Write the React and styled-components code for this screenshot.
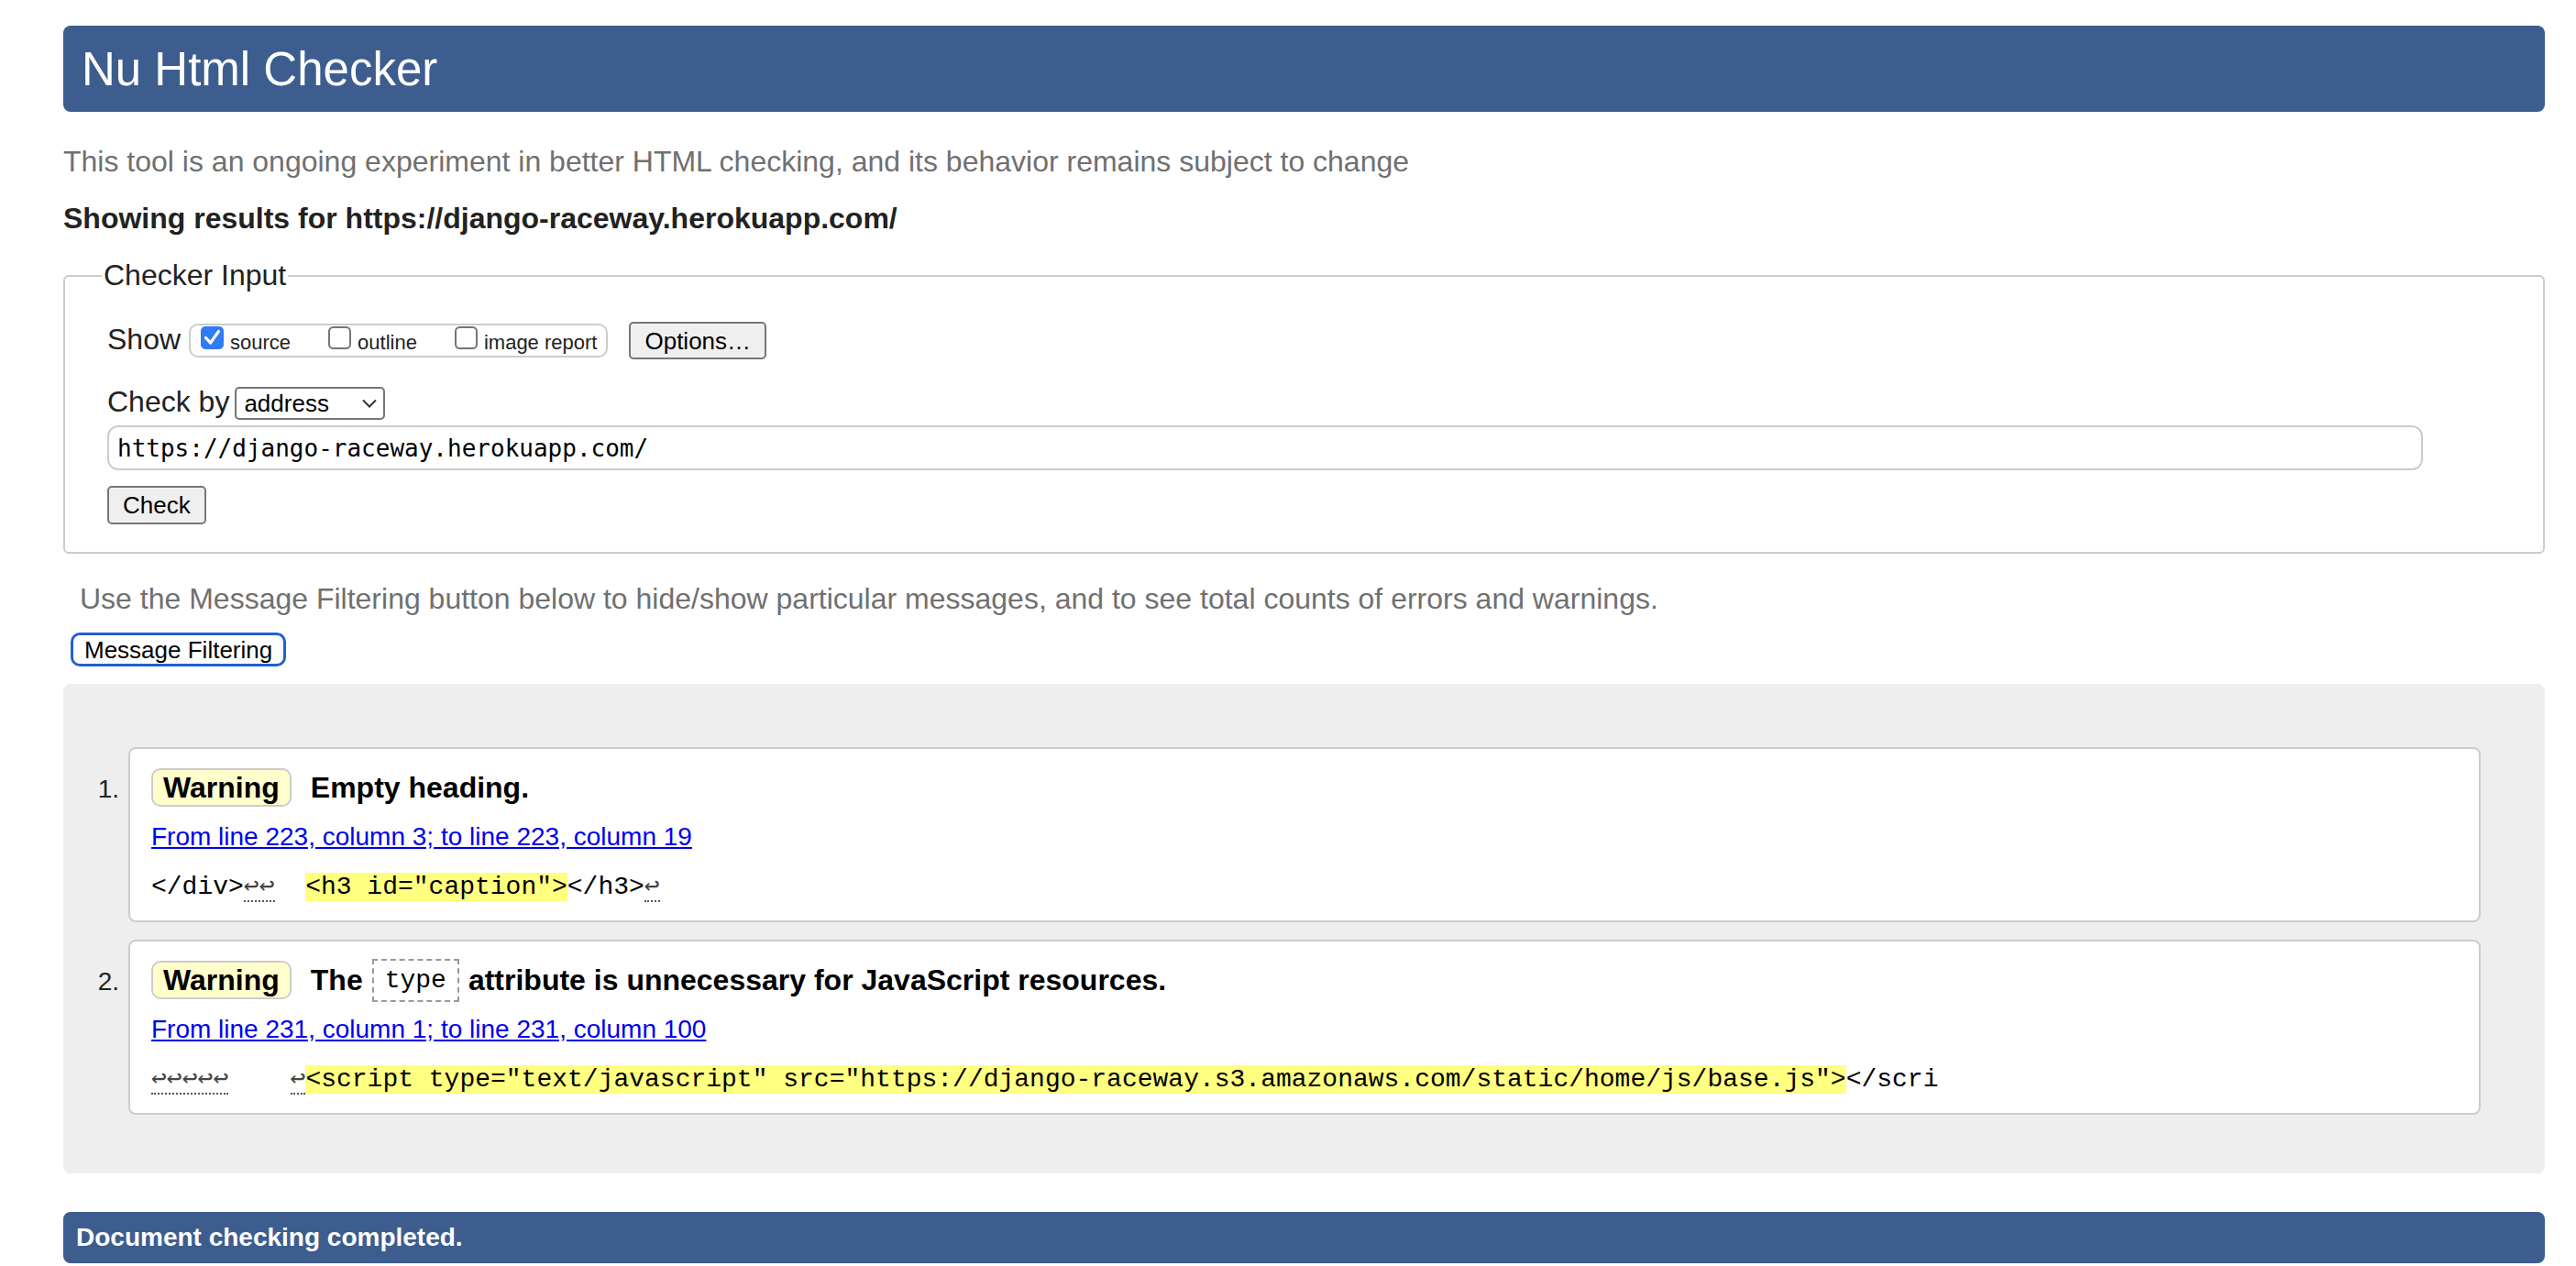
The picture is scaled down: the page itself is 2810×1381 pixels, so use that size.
import React from "react"
import styled, { createGlobalStyle } from "styled-components"

const GlobalStyle = createGlobalStyle`
  html, body {
    margin: 0;
    padding: 0;
    background: #fff;
  }
  body {
    font-family: "Liberation Sans", Arial, sans-serif;
    color: #222;
  }
`

const Page = styled.div`
  padding: 28px 34px 4px 69px;
`

const Title = styled.h1`
  margin: 0;
  height: 94px;
  display: flex;
  align-items: center;
  padding-left: 20px;
  background: #3d5d8f;
  color: #fff;
  font-size: 51px;
  font-weight: normal;
  line-height: 57px;
  border-radius: 8px;
`

const Para = styled.p`
  margin: ${(p) => p.$mt}px 0 0 ${(p) => p.$ml || 0}px;
  font-size: 32px;
  line-height: 37px;
  color: ${(p) => (p.$muted ? "#707070" : "#222")};
  font-weight: ${(p) => (p.$bold ? "bold" : "normal")};
`

const InputFieldset = styled.fieldset`
  margin: 25px 0 0;
  min-width: 0;
  border: 2px solid #ccc;
  border-radius: 6px;
  padding: 32px 131px 30px 46px;
`

const Legend = styled.legend`
  margin-left: -6px;
  padding: 0 2px;
  font-size: 32px;
  line-height: 37px;
  color: #222;
`

const FormRow = styled.div`
  display: flex;
  align-items: baseline;
  margin-top: ${(p) => p.$mt || 0}px;
`

const RowLabel = styled.span`
  font-size: 32px;
  line-height: 37px;
  color: #222;
  margin-right: ${(p) => p.$gap}px;
`

const OptionGroup = styled.span`
  display: inline-flex;
  align-items: center;
  box-sizing: border-box;
  height: 37px;
  border: 2px solid #ccc;
  border-radius: 10px;
  padding: 0 10px 0 11px;
  margin-right: 23px;
`

const CheckItem = styled.label`
  display: inline-flex;
  align-items: baseline;
  margin-right: ${(p) => (p.$last ? 0 : 41)}px;
  font-size: 22px;
  line-height: 26px;
  color: #222;
`

const BoxIcon = styled.svg`
  flex-shrink: 0;
  margin-right: 7px;
`

const Button = styled.button`
  box-sizing: border-box;
  height: ${(p) => p.$h}px;
  padding: 0 15px;
  background: #efefef;
  border: 2px solid #767676;
  border-radius: 5px;
  color: #000;
  font-family: "Liberation Sans", Arial, sans-serif;
  font-size: 26px;
  line-height: 32px;
`

const SelectBox = styled.span`
  display: inline-flex;
  align-items: center;
  justify-content: space-between;
  box-sizing: border-box;
  width: 164px;
  height: 36px;
  padding: 0 7px 0 8px;
  border: 2px solid #767676;
  border-radius: 5px;
  background: #fff;
  font-size: 26px;
  line-height: 32px;
  color: #000;
`

const UrlInput = styled.input`
  display: block;
  box-sizing: border-box;
  width: 100%;
  height: 49px;
  margin-top: 6px;
  padding: 0 9px;
  border: 2px solid #ccc;
  border-radius: 12px;
  background: #fff;
  font-family: "DejaVu Sans Mono", Menlo, monospace;
  font-size: 26px;
  color: #000;
  outline: none;
`

const ButtonRow = styled.div`
  margin-top: 17px;
`

const FilterRow = styled.div`
  margin: 18px 0 0 8px;
`

const FilterButton = styled.button`
  box-sizing: border-box;
  height: 37px;
  padding: 0 12px;
  background: #fff;
  border: 3px solid #1f62d1;
  border-radius: 10px;
  color: #000;
  font-family: "Liberation Sans", Arial, sans-serif;
  font-size: 26px;
  line-height: 30px;
`

const Results = styled.ol`
  list-style: none;
  margin: 19px 0 0;
  padding: 69px 70px 64px 0;
  background: #eee;
  border-radius: 8px;
  display: flex;
  flex-direction: column;
  gap: 19px;
`

const ResultItem = styled.li`
  display: grid;
  grid-template-columns: 71px 1fr;
  align-items: baseline;
`

const ItemNumber = styled.span`
  text-align: right;
  padding-right: 10px;
  font-size: 28px;
  color: #222;
`

const Card = styled.div`
  background: #fff;
  border: 2px solid #ccc;
  border-radius: 8px;
  padding: 21px 24px 20px 23px;
`

const MessageLine = styled.p`
  margin: 0;
  display: flex;
  align-items: center;
  font-size: 32px;
  line-height: 42px;
  font-weight: bold;
  color: #000;
`

const Badge = styled.span`
  box-sizing: border-box;
  height: 42px;
  line-height: 38px;
  padding: 0 11px;
  margin-right: 21px;
  border: 2px solid #ccc;
  border-radius: 10px;
  background: #ffffcc;
`

const InlineCode = styled.code`
  margin: -3px 10px;
  padding: 0 12px;
  border: 2px dashed #999;
  font-family: "Liberation Mono", "Courier New", monospace;
  font-size: 28px;
  font-weight: normal;
  line-height: 43px;
`

const Location = styled.p`
  margin: 17px 0 0;
  font-size: 28px;
  line-height: 32px;

  a {
    color: #0000ee;
    text-decoration: underline;
  }
`

const Extract = styled.p`
  margin: 21px 0 0;
  font-family: "Liberation Mono", "Courier New", monospace;
  font-size: 28px;
  line-height: 32px;
  white-space: pre;
  color: #000;
`

const Highlight = styled.b`
  font-weight: normal;
  background: #ffff80;
`

const Breaks = styled.span`
  font-family: "DejaVu Sans Mono", monospace;
  color: #444;
  border-bottom: 2px dotted #555;
`

const StatusBar = styled.p`
  margin: 42px 0 0;
  height: 56px;
  line-height: 56px;
  padding-left: 14px;
  background: #3d5d8f;
  color: #fff;
  font-size: 28px;
  font-weight: bold;
  border-radius: 8px;
`

const Checkbox = ({ checked }) => (
  <BoxIcon width="25" height="25" viewBox="0 0 25 25">
    {checked ? (
      <>
        <rect x="0" y="0" width="25" height="25" rx="5" fill="#2f7cf6" />
        <path
          d="M5.5 12.5 L10.5 18 L19.5 5.5"
          fill="none"
          stroke="#fff"
          strokeWidth="3.2"
          strokeLinecap="round"
          strokeLinejoin="round"
        />
      </>
    ) : (
      <rect x="1" y="1" width="23" height="23" rx="4.5" fill="#fff" stroke="#767676" strokeWidth="2" />
    )}
  </BoxIcon>
)

const Chevron = () => (
  <svg width="16" height="10" viewBox="0 0 16 10">
    <path d="M1 1.5 L8 8.5 L15 1.5" fill="none" stroke="#333" strokeWidth="2" />
  </svg>
)

const messages = [
  {
    text: <>Empty heading.</>,
    location: "From line 223, column 3; to line 223, column 19",
    extract: (
      <>
        {"</div>"}
        <Breaks>↩↩</Breaks>
        {"  "}
        <Highlight>{'<h3 id="caption">'}</Highlight>
        {"</h3>"}
        <Breaks>↩</Breaks>
      </>
    ),
  },
  {
    text: (
      <>
        The<InlineCode>type</InlineCode>attribute is unnecessary for JavaScript resources.
      </>
    ),
    location: "From line 231, column 1; to line 231, column 100",
    extract: (
      <>
        <Breaks>↩↩↩↩↩</Breaks>
        {"    "}
        <Breaks>↩</Breaks>
        <Highlight>
          {'<script type="text/javascript" src="https://django-raceway.s3.amazonaws.com/static/home/js/base.js">'}
        </Highlight>
        {"</scri"}
      </>
    ),
  },
]

const App = () => {
  return (
    <Page>
      <GlobalStyle />
      <Title>Nu Html Checker</Title>
      <Para $mt={36} $muted>
        This tool is an ongoing experiment in better HTML checking, and its behavior remains subject to change
      </Para>
      <Para $mt={25} $bold>
        Showing results for https://django-raceway.herokuapp.com/
      </Para>

      <InputFieldset>
        <Legend>Checker Input</Legend>
        <FormRow>
          <RowLabel $gap={9}>Show</RowLabel>
          <OptionGroup>
            <CheckItem>
              <Checkbox checked />
              source
            </CheckItem>
            <CheckItem>
              <Checkbox />
              outline
            </CheckItem>
            <CheckItem $last>
              <Checkbox />
              image report
            </CheckItem>
          </OptionGroup>
          <Button $h={41}>Options…</Button>
        </FormRow>
        <FormRow $mt={28}>
          <RowLabel $gap={6}>Check by</RowLabel>
          <SelectBox>
            address
            <Chevron />
          </SelectBox>
        </FormRow>
        <UrlInput readOnly value="https://django-raceway.herokuapp.com/" />
        <ButtonRow>
          <Button $h={42}>Check</Button>
        </ButtonRow>
      </InputFieldset>

      <Para $mt={31} $ml={18} $muted>
        Use the Message Filtering button below to hide/show particular messages, and to see total counts of errors and
        warnings.
      </Para>
      <FilterRow>
        <FilterButton>Message Filtering</FilterButton>
      </FilterRow>

      <Results>
        {messages.map((m, i) => (
          <ResultItem key={i}>
            <ItemNumber>{i + 1}.</ItemNumber>
            <Card>
              <MessageLine>
                <Badge>Warning</Badge>
                {m.text}
              </MessageLine>
              <Location>
                <a href="#">{m.location}</a>
              </Location>
              <Extract>{m.extract}</Extract>
            </Card>
          </ResultItem>
        ))}
      </Results>

      <StatusBar>Document checking completed.</StatusBar>
    </Page>
  )
}

export default App
